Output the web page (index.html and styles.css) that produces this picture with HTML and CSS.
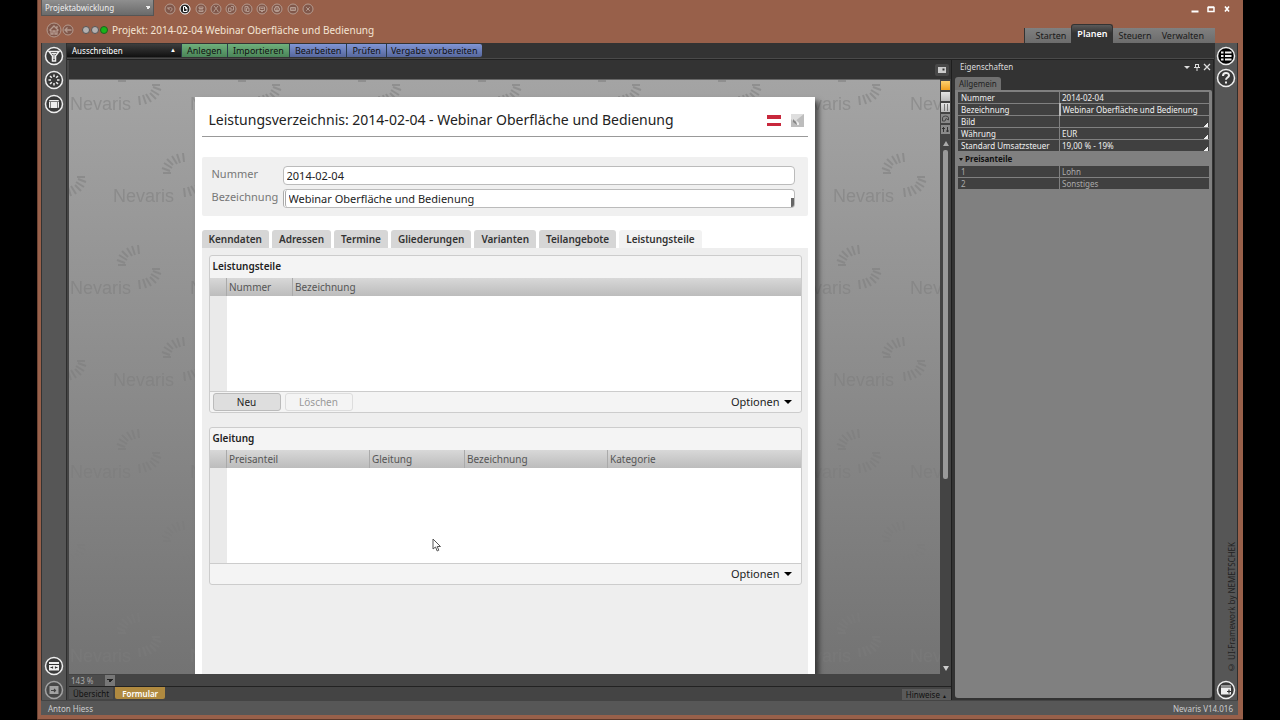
FILE: index.html
```html
<!DOCTYPE html>
<html lang="de">
<head>
<meta charset="utf-8">
<title>Nevaris – Projekt: 2014-02-04 Webinar Oberfläche und Bedienung</title>
<link rel="stylesheet" href="styles.css">
</head>
<body>
<div class="window">
  <header class="topbar">
    <select class="mode" aria-label="Modus"><option>Projektabwicklung</option></select>
    <div class="tools">
      <button aria-label="Rückgängig"><svg viewBox="0 0 12 12"><circle cx="6" cy="6" r="5"/><path d="M4 4v2h2M4 6c1-2 4-2 4 0s-1 2-2 2"/></svg></button>
      <button class="on" aria-label="Neu"><svg viewBox="0 0 12 12"><circle cx="6" cy="6" r="5"/><path d="M4.500 3.500h2l1.500 1.500v3.500h-3.500zM6.500 3.500v2h1.500"/></svg></button>
      <button aria-label="Speichern"><svg viewBox="0 0 12 12"><circle cx="6" cy="6" r="5"/><path d="M4 4h4v1.500h-4zM4 7h4v1.500h-4z"/></svg></button>
      <button aria-label="Ausschneiden"><svg viewBox="0 0 12 12"><circle cx="6" cy="6" r="5"/><path d="M4 3l4 5M8 3L4 8M3.500 8.500h1M7.500 8.500h1"/></svg></button>
      <button aria-label="Kopieren"><svg viewBox="0 0 12 12"><circle cx="6" cy="6" r="5"/><path d="M3.500 5h2.500v3.500h-2.500zM6 3.500h2.500v3.500h-2"/></svg></button>
      <button aria-label="Einfügen"><svg viewBox="0 0 12 12"><circle cx="6" cy="6" r="5"/><path d="M4 3.500h3v1.500M4 3.500v4.500h1M5.500 5h2.500v3.500h-2.500z"/></svg></button>
      <button aria-label="Kommentar"><svg viewBox="0 0 12 12"><circle cx="6" cy="6" r="5"/><path d="M3.500 4h5v3.500h-5zM5 8.500h2M4.500 5.500h3"/></svg></button>
      <button aria-label="Drucken"><svg viewBox="0 0 12 12"><circle cx="6" cy="6" r="5"/><path d="M4.500 5V3.500h3V5M3.500 5h5v2.500h-5zM4.500 7h3v1.500h-3z"/></svg></button>
      <button aria-label="Ansicht"><svg viewBox="0 0 12 12"><circle cx="6" cy="6" r="5"/><path d="M3.500 4.500h5v3h-5zM3.500 6h5"/></svg></button>
      <button aria-label="Abbrechen"><svg viewBox="0 0 12 12"><circle cx="6" cy="6" r="5"/><path d="M4.200 4.200l3.600 3.600M7.800 4.200L4.200 7.800"/></svg></button>
    </div>
    <div class="wincontrols">
      <button aria-label="Minimieren"><svg viewBox="0 0 8 8"><path d="M0.500 6.500h7" stroke-width="2"/></svg></button>
      <button aria-label="Maximieren"><svg viewBox="0 0 8 8"><path d="M1 2.500h6v4h-6zM1 2h6" stroke-width="1.500"/></svg></button>
      <button aria-label="Schließen"><svg viewBox="0 0 8 8"><path d="M2 1.500l4 5M6 1.500l-4 5" stroke-width="1.600"/></svg></button>
    </div>
  </header>

  <div class="titlebar">
    <button class="nav" aria-label="Startseite"><svg viewBox="0 0 16 16"><circle cx="8" cy="8" r="7"/><path d="M3.500 8.500L8 4l4.500 4.500M5 8v4h2v-3h2v3h2V8M11 4v2" stroke-width="1.300"/></svg></button>
    <button class="nav back" aria-label="Zurück"><svg viewBox="0 0 12 12"><circle cx="6" cy="6" r="5"/><path d="M3 6h6.500M5.500 3.500L3 6l2.500 2.500" stroke-width="1.300"/></svg></button>
    <span class="lights"><i></i><i></i><i class="green"></i></span>
    <h1>Projekt: 2014-02-04 Webinar Oberfläche und Bedienung</h1>
    <nav class="phases">
      <button>Starten</button><button class="active">Planen</button><button>Steuern</button><button>Verwalten</button>
    </nav>
  </div>

  <div class="body">
    <aside class="rail">
      <button aria-label="Filter"><svg viewBox="0 0 20 20"><circle class="ring" cx="10" cy="10" r="8.500"/><path d="M5 5.500h10l-3.500 4.500v5h-3v-5z" stroke-width="1.500"/><path d="M7.500 7.500h5M10 8v5"/></svg></button>
      <button aria-label="Suche"><svg viewBox="0 0 20 20"><circle class="ring" cx="10" cy="10" r="8.500"/><path d="M10 4.500v2.500M10 13v2.500M4.500 10H7M13 10h2.500M6 6l1.800 1.800M12.200 12.200L14 14M14 6l-1.800 1.800M7.800 12.200L6 14" stroke-width="1.500"/></svg></button>
      <button aria-label="Fenster"><svg viewBox="0 0 20 20"><circle class="ring" cx="10" cy="10" r="8.500"/><rect class="fill" x="5" y="6" width="10" height="8" rx="1"/><path class="dark" d="M5 7.500h10M6.500 8v6M13.500 8v6" stroke-width=".6"/></svg></button>
      <span class="push"></span>
      <button aria-label="Bereiche"><svg viewBox="0 0 20 20"><circle class="ring" cx="10" cy="10" r="8.500"/><path class="fill" d="M5 6h10v8.500h-10z"/><path class="dark" d="M5 8.500h10M6.500 11.500h2M11.500 11.500h2M8.500 10.500v2M11.500 10.500v2"/></svg></button>
      <button class="dim" aria-label="Anmelden"><svg viewBox="0 0 20 20"><circle class="ring" cx="10" cy="10" r="8.500"/><path class="fill" d="M5.500 6h9v8h-9z"/><path class="dark" d="M7 10.500h4.500M10 9l1.500 1.500L10 12"/></svg></button>
    </aside>

    <div class="center">
      <div class="ribbon">
        <button class="section">Ausschreiben <span>▲</span></button>
        <button class="g">Anlegen</button><button class="g">Importieren</button>
        <button class="b">Bearbeiten</button><button class="b">Prüfen</button><button class="b last">Vergabe vorbereiten</button>
      </div>

      <div class="work">
        <main class="doc">
          <div class="dochead"><button aria-label="Fenster lösen"><svg viewBox="0 0 12 10"><path d="M2 2h8v6h-8z" fill="#ccc"/><path d="M6.500 3.500h2v2h-2z" fill="#333"/></svg></button></div>
          <div class="docbody">
            <div class="canvas">
              <svg class="mark" aria-hidden="true">
                <defs>
                  <g id="rays">
                    <path d="M-21 -2l8 0M-22 -7l8 3M-20 -12l8 5M-17 -16l6 6M-12 -19l5 8M-7 -21l3 9M-1 -22l1 9M21 2l-8 0M22 7l-8 -3M20 12l-8 -5M17 16l-6 -6M12 19l-5 -8M7 21l-3 -9M1 22l-1 -9" fill="none" stroke="#7c7c7c" stroke-width="2"/>
                  </g>
                  <pattern id="tile" width="120" height="184" patternUnits="userSpaceOnUse">
                    <text x="1" y="30">Nevaris</text>
                    <text x="44" y="122">Nevaris</text>
                    <use href="#rays" x="70" y="3"/><use href="#rays" x="70" y="187"/>
                    <use href="#rays" x="115" y="95"/><use href="#rays" x="-5" y="95"/>
                  </pattern>
                </defs>
                <rect width="100%" height="100%" fill="url(#tile)"/>
              </svg>
              <article class="sheet">
                <div class="sheethead">
                  <h2>Leistungsverzeichnis: 2014-02-04 - Webinar Oberfläche und Bedienung</h2>
                  <svg class="flag" viewBox="0 0 14 11"><path fill="#c8283c" d="M0 0h14v4H0zM0 8h14v3H0z"/><path fill="#fff" d="M0 4h14v4H0z"/></svg>
                  <svg class="note" viewBox="0 0 13 13"><path fill="#bdbdbd" d="M0 0h13v13H0z"/><path fill="#dedede" d="M0 0h13L3 8 0 5z"/><path fill="#888" d="M2 5l6 6H6L2 8z"/><path fill="#eee" d="M5 6l3 3v2h-2z"/></svg>
                </div>
                <div class="fields">
                  <label for="nr">Nummer</label><input id="nr" value="2014-02-04">
                  <label for="bez">Bezeichnung</label><input id="bez" class="multi" value="Webinar Oberfläche und Bedienung">
                </div>
                <div class="tabs">
                  <button>Kenndaten</button><button>Adressen</button><button>Termine</button><button>Gliederungen</button><button>Varianten</button><button>Teilangebote</button><button class="active">Leistungsteile</button>
                </div>
                <div class="pane">
                  <section class="group">
                    <h3>Leistungsteile</h3>
                    <table>
                      <colgroup><col class="c-mark"><col class="c-nr"><col></colgroup>
                      <thead><tr><th></th><th>Nummer</th><th>Bezeichnung</th></tr></thead>
                      <tbody><tr><td></td><td></td><td></td></tr></tbody>
                    </table>
                    <footer><button class="btn">Neu</button><button class="btn off" disabled>Löschen</button><button class="opt">Optionen <i></i></button></footer>
                  </section>
                  <section class="group">
                    <h3>Gleitung</h3>
                    <table>
                      <colgroup><col class="c-mark"><col class="c-pa"><col class="c-gl"><col class="c-pa"><col></colgroup>
                      <thead><tr><th></th><th>Preisanteil</th><th>Gleitung</th><th>Bezeichnung</th><th>Kategorie</th></tr></thead>
                      <tbody><tr><td></td><td></td><td></td><td></td><td></td></tr></tbody>
                    </table>
                    <footer><button class="opt">Optionen <i></i></button></footer>
                  </section>
                </div>
              </article>
              <svg class="cursor" viewBox="0 0 10 14"><path d="M1 1v10l2.500-2 1.700 4 1.600-.8L5.200 8.500H8.500z" fill="#fff" stroke="#555"/></svg>
            </div>
            <div class="side">
              <button class="amber" aria-label="Formularansicht"></button>
              <button aria-label="Liste"></button>
              <button aria-label="Spalten"><svg viewBox="0 0 9 9"><path d="M3.500 1v7M6.500 1v7" stroke="#777"/></svg></button>
              <button class="grey" aria-label="Bild"><svg viewBox="0 0 9 9"><path d="M1.500 7V4a3 2 0 0 1 6 0v2L5 4.500 4 7z" fill="none" stroke="#444"/></svg></button>
              <button class="grey" aria-label="Sortieren"><svg viewBox="0 0 9 9"><path d="M2.500 2v5M1 3.500h3M6.500 2v5M5 6h3" fill="none" stroke="#333"/></svg></button>
              <span class="up"></span>
              <div class="track"><div class="thumb"></div></div>
              <span class="down"></span>
            </div>
          </div>
          <div class="zoombar"><select aria-label="Zoom"><option>143 %</option></select></div>
          <div class="views">
            <button>Übersicht</button><button class="active">Formular</button>
            <button class="hints">Hinweise <span>▲</span></button>
          </div>
        </main>

        <aside class="props">
          <div class="propshead"><h2>Eigenschaften</h2>
            <button aria-label="Menü"><svg viewBox="0 0 8 8"><path d="M1 3h6L4 6z" fill="#ddd"/></svg></button>
            <button aria-label="Anheften"><svg viewBox="0 0 8 8"><path d="M2 1.500h4M2.500 1.500v3M5.500 1.500v3M1 4.500h6M4 4.500V8" fill="none" stroke="#ddd"/></svg></button>
            <button aria-label="Schließen"><svg viewBox="0 0 8 8"><path d="M1 1l6 6M7 1L1 7" fill="none" stroke="#ddd" stroke-width="1.300"/></svg></button>
          </div>
          <div class="proptabs"><button>Allgemein</button></div>
          <div class="propsbody">
            <table>
              <tbody>
                <tr><th>Nummer</th><td>2014-02-04</td></tr>
                <tr><th>Bezeichnung</th><td class="bar">Webinar Oberfläche und Bedienung</td></tr>
                <tr><th>Bild</th><td class="corner"></td></tr>
                <tr><th>Währung</th><td class="corner">EUR</td></tr>
                <tr><th>Standard Umsatzsteuer</th><td class="corner">19,00 % - 19%</td></tr>
              </tbody>
            </table>
            <h3><i></i>Preisanteile</h3>
            <table class="muted">
              <tbody>
                <tr><th>1</th><td>Lohn</td></tr>
                <tr><th>2</th><td>Sonstiges</td></tr>
              </tbody>
            </table>
          </div>
        </aside>
      </div>
    </div>

    <aside class="rail right">
      <button class="black" aria-label="Eigenschaften"><svg viewBox="0 0 20 20"><circle class="ring" cx="10" cy="10" r="8.500"/><path d="M5 6.500h2.500M5 10h2.500M5 13.500h2.500M9 6.500h6.500M9 10h6.500M9 13.500h6.500" stroke-width="1.800"/></svg></button>
      <button aria-label="Hilfe"><svg viewBox="0 0 20 20"><circle class="ring" cx="10" cy="10" r="8.500"/><path d="M7 8c0-4 6-4 6-.5 0 2-3 2-3 4.300M10 13.500v2" stroke-width="2"/></svg></button>
      <span class="push"></span>
      <small>© UI-Framework by NEMETSCHEK</small>
      <button aria-label="Bereich öffnen"><svg viewBox="0 0 20 20"><circle class="ring" cx="10" cy="10" r="8.500"/><path class="fill" d="M5 5.500h10v9h-10z"/><path class="dark" d="M5 7h10M11 11.500h4M13 9.500v4"/></svg></button>
    </aside>
  </div>

  <footer class="status"><span>Anton Hiess</span><span>Nevaris V14.016</span></footer>
</div>
</body>
</html>
```

FILE: styles.css
```css
* { box-sizing: border-box; }
body {
  margin: 0;
  background: #000;
  font-family: "Noto Sans", "Open Sans", sans-serif;
  font-size: 8px;
  line-height: 12px;
  color: #ddd;
}
button, input, select { font: inherit; color: inherit; }
button { border: 0; padding: 0; background: none; white-space: nowrap; }
h1, h2, h3 { margin: 0; font-weight: 400; }
table { width: 100%; border-collapse: collapse; table-layout: fixed; }
svg { display: block; }

.window {
  display: flex;
  flex-direction: column;
  height: 100vh;
  margin: 0 37px;
  padding: 0 5px 4px 3px;
  background: #98604a;
  border-left: 1px solid #6d4434;
  border-bottom: 1px solid #5a382b;
}

/* top bar */
.topbar { display: flex; align-items: center; height: 17px; padding-right: 7px; }
.mode {
  appearance: none;
  width: 113px;
  height: 16px;
  margin-bottom: 1px;
  padding: 0 3px;
  border: 1px solid #555;
  border-top: 0;
  color: #eee;
  background:
    linear-gradient(to bottom left, #eee 50%, transparent 50%) 103px 6px / 3px 3px no-repeat,
    linear-gradient(to bottom right, #eee 50%, transparent 50%) 106px 6px / 3px 3px no-repeat,
    linear-gradient(#8f8f8f, #6a6a6a);
}
.tools { display: flex; justify-content: space-between; width: 150px; margin-left: 10px; }
.tools svg { width: 12px; height: 12px; fill: #80574a; stroke: #b59a8e; stroke-width: 1; }
.tools path { fill: none; }
.tools .on svg { fill: #222; stroke: #fff; }
.wincontrols { display: flex; gap: 8px; margin-left: auto; }
.wincontrols svg { width: 8px; height: 8px; fill: none; stroke: #fff; }

/* title bar */
.titlebar { display: flex; align-items: center; height: 26px; padding-left: 5px; }
.nav svg { width: 16px; height: 16px; fill: none; stroke: #b59a8e; }
.nav circle { fill: #80574a; }
.nav.back svg { width: 12px; height: 12px; }
.lights { display: flex; gap: 1px; margin: 0 4px 0 8px; }
.lights i { width: 8px; height: 8px; border: 1px solid #555; border-radius: 50%; background: #b4b0b0; }
.lights .green { background: #18b418; border-color: #206020; }
.titlebar h1 { font-size: 10px; line-height: 16px; color: #f4e4d4; white-space: nowrap; }
.phases {
  display: flex;
  align-items: flex-end;
  align-self: flex-end;
  height: 19px;
  margin-left: auto;
  margin-right: 23px;
  padding-right: 6px;
  background: linear-gradient(#808080, #6c6c6c) 0 4px / 100% 15px no-repeat;
  font-size: 9px;
  color: #1a1a1a;
}
.phases button { height: 15px; padding: 0 5px; }
.phases button:first-child { padding: 0 5px 0 11px; border-left: 1px solid #333; }
.phases .active {
  height: 19px;
  color: #fff;
  font-weight: 600;
  background: linear-gradient(#5a5a5a, #333 8px);
  border: 1px solid #333;
  border-bottom: 0;
  border-radius: 3px 3px 0 0;
}

/* body */
.body { display: flex; flex: 1; min-height: 0; background: #333; }
.rail {
  display: flex;
  flex-direction: column;
  align-items: center;
  gap: 4px;
  width: 26px;
  padding: 3px 0 0;
  background: #565656;
  border-right: 1px solid #2e2e2e;
  border-left: 1px solid #333;
}
.rail.right { width: 24px; gap: 2px; }
.rail svg { width: 20px; height: 20px; fill: none; stroke: #eee; stroke-width: 1.200; }
.rail .ring { fill: #3a3a3a; stroke-width: 1.500; }
.rail .black .ring { fill: #000; }
.rail .fill { fill: #eee; stroke: none; }
.rail .dark { stroke: #333; }
.rail .dim { opacity: .5; }
.push { flex: 1; }
.rail small {
  writing-mode: vertical-rl;
  transform: rotate(180deg);
  margin: 0 0 5px 12px;
  font-size: 8px;
  line-height: 10px;
  color: #222;
  white-space: nowrap;
}
.center { display: flex; flex-direction: column; flex: 1; min-width: 0; }

.ribbon { display: flex; height: 16px; padding: 1px 0; font-size: 9px; line-height: 13px; color: #111; border-bottom: 1px solid #4a4a4a; }
.ribbon button { padding: 0 5px; border-right: 1px solid #2a3a4a; }
.ribbon .section { display: flex; justify-content: space-between; width: 115px; padding: 0 5px; color: #fff; background: linear-gradient(#3d3d3d, #111); font-size: 8px; }
.ribbon .section span { font-size: 6px; }
.ribbon .g { background: linear-gradient(#6fb07c, #4a8558); }
.ribbon .b { background: linear-gradient(#8095d6, #56679c); }
.ribbon .last { padding: 0 4px; border-right: 0; border-radius: 0 2px 2px 0; }

.work { display: flex; flex: 1; min-height: 0; border-top: 1px solid #222; }
.doc { display: flex; flex-direction: column; flex: 1; min-width: 0; padding-left: 2px; background: #444; border-right: 1px solid #1e1e1e; }
.dochead { display: flex; align-items: center; justify-content: flex-end; height: 19px; padding-right: 2px; background: #333; }
.dochead button { padding: 1px; background: #484848; border-radius: 2px; }
.dochead svg { width: 12px; height: 10px; }
.docbody { display: flex; flex: 1; min-height: 0; }
.canvas { position: relative; flex: 1; min-width: 0; overflow: hidden; background: linear-gradient(#a4a4a4, #8e8e8e 45%, #737373); border-top: 1px solid #666; }
.mark { position: absolute; inset: 0; width: 100%; height: 100%; opacity: .5; }
.mark text { font: 18px "Liberation Sans", sans-serif; fill: #7c7c7c; }

/* sheet */
.sheet {
  position: relative;
  display: flex;
  flex-direction: column;
  width: 620px;
  height: calc(100% - 17px);
  margin: 17px auto 0;
  padding: 0 7px;
  background: #fff;
  color: #222;
  font-size: 11px;
  line-height: 18px;
  box-shadow: 4px 4px 5px rgba(0, 0, 0, .5);
}
.sheethead { display: flex; align-items: center; height: 40px; padding: 7px 4px 0 7px; border-bottom: 1px solid #999; }
.sheethead h2 { flex: 1; font-size: 14px; white-space: nowrap; }
.flag { width: 14px; height: 11px; margin-right: 10px; }
.note { width: 13px; height: 13px; }
.fields {
  display: grid;
  grid-template-columns: 71px 1fr;
  row-gap: 4px;
  margin-top: 20px;
  padding: 9px 13px 8px 10px;
  background: #f0f0f0;
  border-radius: 2px;
  line-height: 16px;
  color: #777;
}
.fields input { width: 100%; height: 19px; padding: 0 3px; border: 1px solid #bbb; border-radius: 4px; background: #fff; color: #222; }
.fields .multi { border-left: 3px double #aaa; background: linear-gradient(#666, #666) 100% 100% / 3px 9px no-repeat #fff; }
.tabs { display: flex; gap: 3px; margin-top: 14px; font-size: 10px; font-weight: 600; }
.tabs button { height: 18px; padding: 0 7px; background: #d6d6d6; border-radius: 3px 3px 0 0; color: #333; }
.tabs .active { background: #f2f2f2; }
.pane { flex: 1; padding: 7px 6px 0 7px; background: #eee; }
.group { margin-bottom: 14px; border: 1px solid #ccc; border-radius: 3px; background: #f4f4f4; }
.group h3 { height: 22px; padding: 1px 3px 0; font-size: 10px; font-weight: 600; }
.group th { height: 18px; padding: 0 2px; font-size: 10px; font-weight: 400; text-align: left; line-height: 16px; color: #555; border-left: 1px solid #aaa; }
.group thead { background: linear-gradient(#d8d8d8, #bcbcbc); }
.group th:first-child { border-left: 0; }
.group td { height: 95px; padding: 0; background: #fff; }
.group td:first-child { background: #eaeaea; }
.c-mark { width: 17px; }
.c-nr { width: 66px; }
.c-pa { width: 143px; }
.c-gl { width: 95px; }
.group footer { display: flex; align-items: center; gap: 4px; height: 21px; padding: 0 9px 0 3px; border-top: 1px solid #ccc; }
.btn { width: 68px; height: 18px; border: 1px solid #bbb; border-radius: 3px; background: #dedede; font-size: 10px; line-height: 16px; }
.btn.off { border-color: #ddd; background: #f4f4f4; color: #999; }
.opt { display: flex; align-items: center; gap: 4px; margin-left: auto; }
.opt i { border: 4px solid transparent; border-top-color: #000; border-bottom: 0; }
.cursor { position: absolute; left: 363px; top: 458px; width: 10px; height: 14px; }

/* right strip */
.side { display: flex; flex-direction: column; align-items: center; gap: 2px; width: 11px; padding: 2px 0 3px; background: #444; }
.side button { width: 9px; height: 9px; background: linear-gradient(#e4e4e4, #bbb); }
.side svg { width: 9px; height: 9px; }
.side .amber { background: linear-gradient(#fbd070, #f0a020); }
.side .grey { background: #8a8a8a; }
.up, .down { border: 3px solid transparent; }
.up { margin-top: 5px; border-top: 0; border-bottom: 5px solid #aaa; }
.down { border-bottom: 0; border-top: 5px solid #ccc; }
.track { flex: 1; width: 5px; margin-top: 2px; }
.thumb { height: 64%; background: #999; border-radius: 2px; }

.zoombar { height: 13px; padding-top: 1px; border-bottom: 1px solid #222; }
.zoombar select {
  display: block;
  appearance: none;
  width: 46px;
  height: 11px;
  padding: 0 2px;
  border: 0;
  line-height: 11px;
  color: #aaa;
  background:
    linear-gradient(to bottom left, #222 50%, transparent 50%) 38px 4px / 3px 3px no-repeat,
    linear-gradient(to bottom right, #222 50%, transparent 50%) 41px 4px / 3px 3px no-repeat,
    linear-gradient(#777, #777) 100% 0 / 10px 11px no-repeat #4c4c4c;
}
.views { display: flex; height: 13px; padding-bottom: 1px; line-height: 11px; color: #111; }
.views button { margin-right: 2px; padding: 0 4px; background: #505050; }
.views .active { padding: 0 7px; background: #b08a40; color: #fff; border-radius: 0 0 2px 2px; font-weight: 600; }
.views .hints { height: 11px; margin: 2px 0 0 auto; background: #5a5a5a; }
.hints span { font-size: 5px; }

/* properties */
.props { display: flex; flex-direction: column; width: 262px; padding: 0 1px 2px 3px; border-right: 1px solid #222; }
.propshead { display: flex; align-items: center; gap: 2px; height: 17px; padding: 0 1px 3px 5px; }
.propshead h2 { flex: 1; font-size: 8px; line-height: 12px; }
.propshead svg { width: 8px; height: 8px; }
.proptabs button { display: block; height: 13px; padding: 0 4px; background: #707070; border-radius: 3px 3px 0 0; color: #222; }
.propsbody { flex: 1; padding: 1px 2px; background: #808080; border-radius: 0 2px 3px 3px; }
.propsbody th, .propsbody td { height: 12px; padding: 0 2px; border: 1px solid #808080; background: #404040; font-weight: 400; text-align: left; line-height: 11px; color: #f0f0f0; white-space: nowrap; }
.propsbody th { width: 102px; padding-left: 3px; }
.propsbody .bar { border-left: 2px solid #bbb; }
.propsbody .corner { background: linear-gradient(to bottom right, transparent 50%, #eee 50%) calc(100% - 1px) 100% / 4px 4px no-repeat #404040; }
.propsbody h3 { display: flex; align-items: center; gap: 2px; height: 13px; padding: 1px 2px 0; font-size: 8px; line-height: 12px; font-weight: 700; color: #111; }
.propsbody h3 i { border: 2px solid transparent; border-top: 3px solid #111; border-bottom: 0; }
.propsbody .muted th, .propsbody .muted td { color: #aaa; }

.status { display: flex; justify-content: space-between; height: 15px; padding: 2px 5px 0 7px; background: #575757; border-top: 1px solid #444; color: #ccc; }
```
